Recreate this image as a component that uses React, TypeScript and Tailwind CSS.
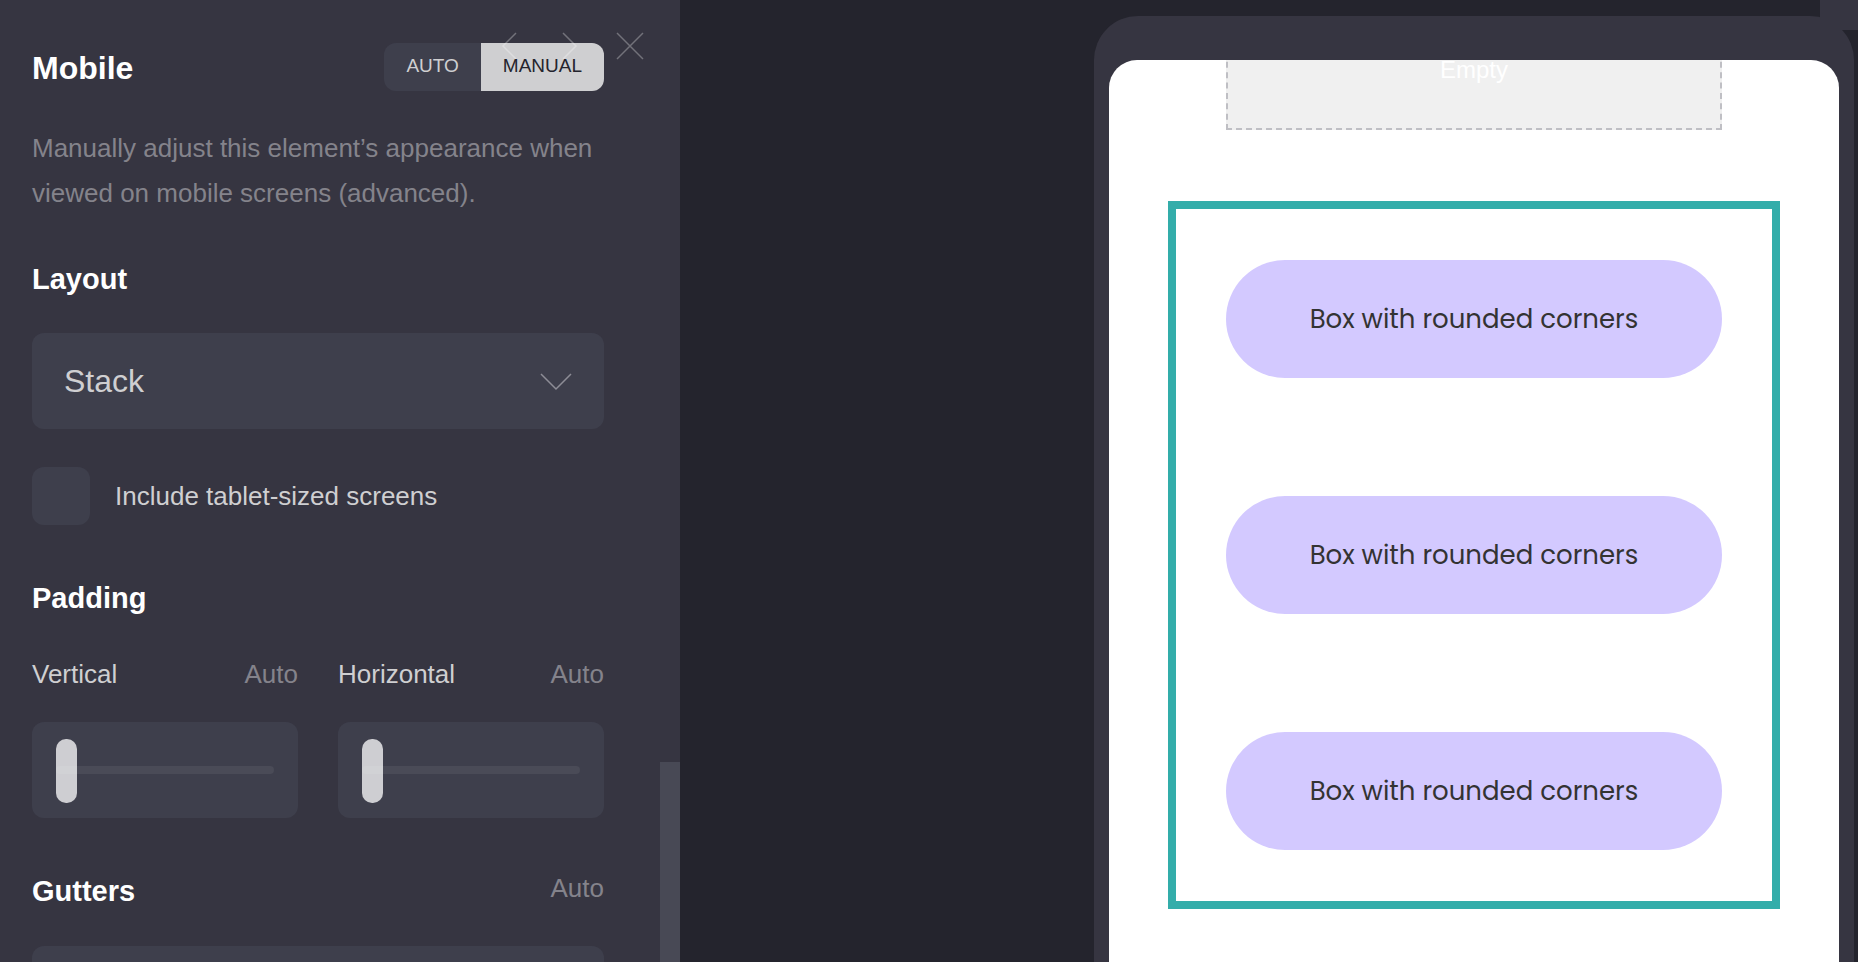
import { useState } from "react";

function SectionTitle({ children }: { children: string }) {
  return <h3 className="text-[29px] leading-10 font-bold text-white">{children}</h3>;
}

function AutoSlider({ label, name, full = false }: { label: string; name: string; full?: boolean }) {
  const [value, setValue] = useState(0);
  return (
    <div className="flex flex-1 flex-col">
      <div className={full ? "flex items-start justify-between" : "flex items-center justify-between"}>
        <label htmlFor={name} className={full ? "text-[29px] leading-10 font-bold text-white" : "text-[26px] leading-10 text-[#cfcfd1]"}>
          {label}
        </label>
        <span className={full ? "text-[26px] leading-[35px] text-[#84838b]" : "text-[26px] leading-10 text-[#84838b]"}>Auto</span>
      </div>
      <div className={full ? "mt-[35px] flex h-24 items-center rounded-xl bg-[#3e3f4c] px-6" : "mt-7 flex h-24 items-center rounded-xl bg-[#3e3f4c] px-6"}>
        <input
          id={name}
          type="range"
          min={0}
          max={100}
          value={value}
          onChange={(e) => setValue(Number(e.target.value))}
          className="h-16 w-full cursor-pointer appearance-none bg-transparent [&::-webkit-slider-runnable-track]:h-2 [&::-webkit-slider-runnable-track]:rounded [&::-webkit-slider-runnable-track]:bg-[#4a4b57] [&::-webkit-slider-thumb]:-mt-[27px] [&::-webkit-slider-thumb]:h-16 [&::-webkit-slider-thumb]:w-[21px] [&::-webkit-slider-thumb]:appearance-none [&::-webkit-slider-thumb]:rounded-[10px] [&::-webkit-slider-thumb]:bg-white/75"
        />
      </div>
    </div>
  );
}

function OverlayNav() {
  return (
    <div className="absolute top-8 right-9 flex text-white/30">
      <button type="button" aria-label="Previous" className="mr-8 h-7 w-7">
        <svg viewBox="0 0 28 28" fill="none" stroke="currentColor" strokeWidth="1.5" className="h-7 w-7">
          <path d="M20 1 L7 14 L20 27" />
        </svg>
      </button>
      <button type="button" aria-label="Next" className="mr-8 h-7 w-7">
        <svg viewBox="0 0 28 28" fill="none" stroke="currentColor" strokeWidth="1.5" className="h-7 w-7">
          <path d="M7 1 L20 14 L7 27" />
        </svg>
      </button>
      <button type="button" aria-label="Close" className="h-7 w-7">
        <svg viewBox="0 0 28 28" fill="none" stroke="currentColor" strokeWidth="1.5" className="h-7 w-7">
          <path d="M1 1 L27 27 M27 1 L1 27" />
        </svg>
      </button>
    </div>
  );
}

function SettingsPanel() {
  const [mode, setMode] = useState("manual");
  const [tablet, setTablet] = useState(false);
  const on = "bg-[#cfcfd1] text-[#24242d]";
  const off = "bg-[#3e3f4c] text-[#cfcfd1]";
  return (
    <aside className="relative flex w-[680px] shrink-0 bg-[#363541]">
      <div className="flex flex-1 flex-col overflow-hidden pt-[43px] pr-14 pl-8">
        <div className="flex h-12 items-start justify-between">
          <h2 className="text-[32px] leading-[50px] font-bold text-white">Mobile</h2>
          <div className="flex h-12 overflow-hidden rounded-xl text-[19px] leading-[46px]">
            <button type="button" onClick={() => setMode("auto")} className={`flex px-[22px] ${mode === "auto" ? on : off}`}>
              AUTO
            </button>
            <button type="button" onClick={() => setMode("manual")} className={`flex px-[22px] ${mode === "manual" ? on : off}`}>
              MANUAL
            </button>
          </div>
        </div>
        <p className="mt-[35px] text-[26px] leading-[45px] text-[#84838b]">
          Manually adjust this element’s appearance when viewed on mobile screens (advanced).
        </p>

        <div className="mt-[43px]">
          <label htmlFor="layout" className="block text-[29px] leading-10 font-bold text-white">Layout</label>
        </div>
        <div className="relative mt-[34px]">
          <select
            id="layout"
            defaultValue="Stack"
            className="h-24 w-full appearance-none rounded-xl bg-[#3e3f4c] px-8 text-[32px] text-[#cfcfd1]"
          >
            <option>Stack</option>
          </select>
          <svg
            viewBox="0 0 32 18"
            fill="none"
            stroke="#8d8d96"
            strokeWidth="1.5"
            className="pointer-events-none absolute top-10 right-8 h-[18px] w-8"
          >
            <path d="M1 1 L16 16 L31 1" />
          </svg>
        </div>

        <label className="mt-[38px] flex items-center gap-[25px] text-[26px] text-[#cfcfd1]">
          <input
            type="checkbox"
            checked={tablet}
            onChange={(e) => setTablet(e.target.checked)}
            className="h-[58px] w-[58px] appearance-none rounded-xl bg-[#3e3f4c] checked:bg-[#cfcfd1]"
          />
          Include tablet-sized screens
        </label>

        <div className="mt-[53px]">
          <SectionTitle>Padding</SectionTitle>
        </div>
        <div className="mt-9 flex gap-10">
          <AutoSlider label="Vertical" name="padding-vertical" />
          <AutoSlider label="Horizontal" name="padding-horizontal" />
        </div>

        <div className="mt-[53px] flex">
          <AutoSlider label="Gutters" name="gutters" full />
        </div>
      </div>
      <div className="flex w-5 flex-col justify-end">
        <div className="h-[200px] bg-[#484955]" />
      </div>
      <OverlayNav />
    </aside>
  );
}

const boxes = ["Box with rounded corners", "Box with rounded corners", "Box with rounded corners"];

function DevicePreview() {
  return (
    <main className="relative flex flex-1 justify-end overflow-hidden pt-4 pr-1">
      <div className="flex w-[760px] flex-col rounded-t-[44px] bg-[#363541] px-[15px] pt-11">
        <div className="flex flex-1 flex-col overflow-hidden rounded-t-[28px] bg-white">
          <div className="mx-[117px] -mt-[50px] flex h-[120px] shrink-0 items-center justify-center border-2 border-dashed border-[#bfbfc4] bg-[#f0f0f0] text-2xl text-white">
            Empty
          </div>
          <div className="mx-[59px] mt-[71px] flex shrink-0 flex-col gap-[118px] border-8 border-[#33adaa] px-[50px] py-[51px]">
            {boxes.map((text, i) => (
              <div
                key={i}
                className="flex h-[118px] items-center justify-center rounded-[59px] bg-[#d3c9ff] font-[Poppins,Inter,sans-serif] text-[26px] text-[#333333]"
              >
                {text}
              </div>
            ))}
          </div>
        </div>
      </div>
      <div className="absolute top-0 right-0 h-[30px] w-[38px] bg-[#363541]" />
    </main>
  );
}

export default function App() {
  return (
    <div className="flex h-screen overflow-hidden bg-[#24242d] font-['Liberation_Sans',Arial,sans-serif]">
      <SettingsPanel />
      <DevicePreview />
    </div>
  );
}
